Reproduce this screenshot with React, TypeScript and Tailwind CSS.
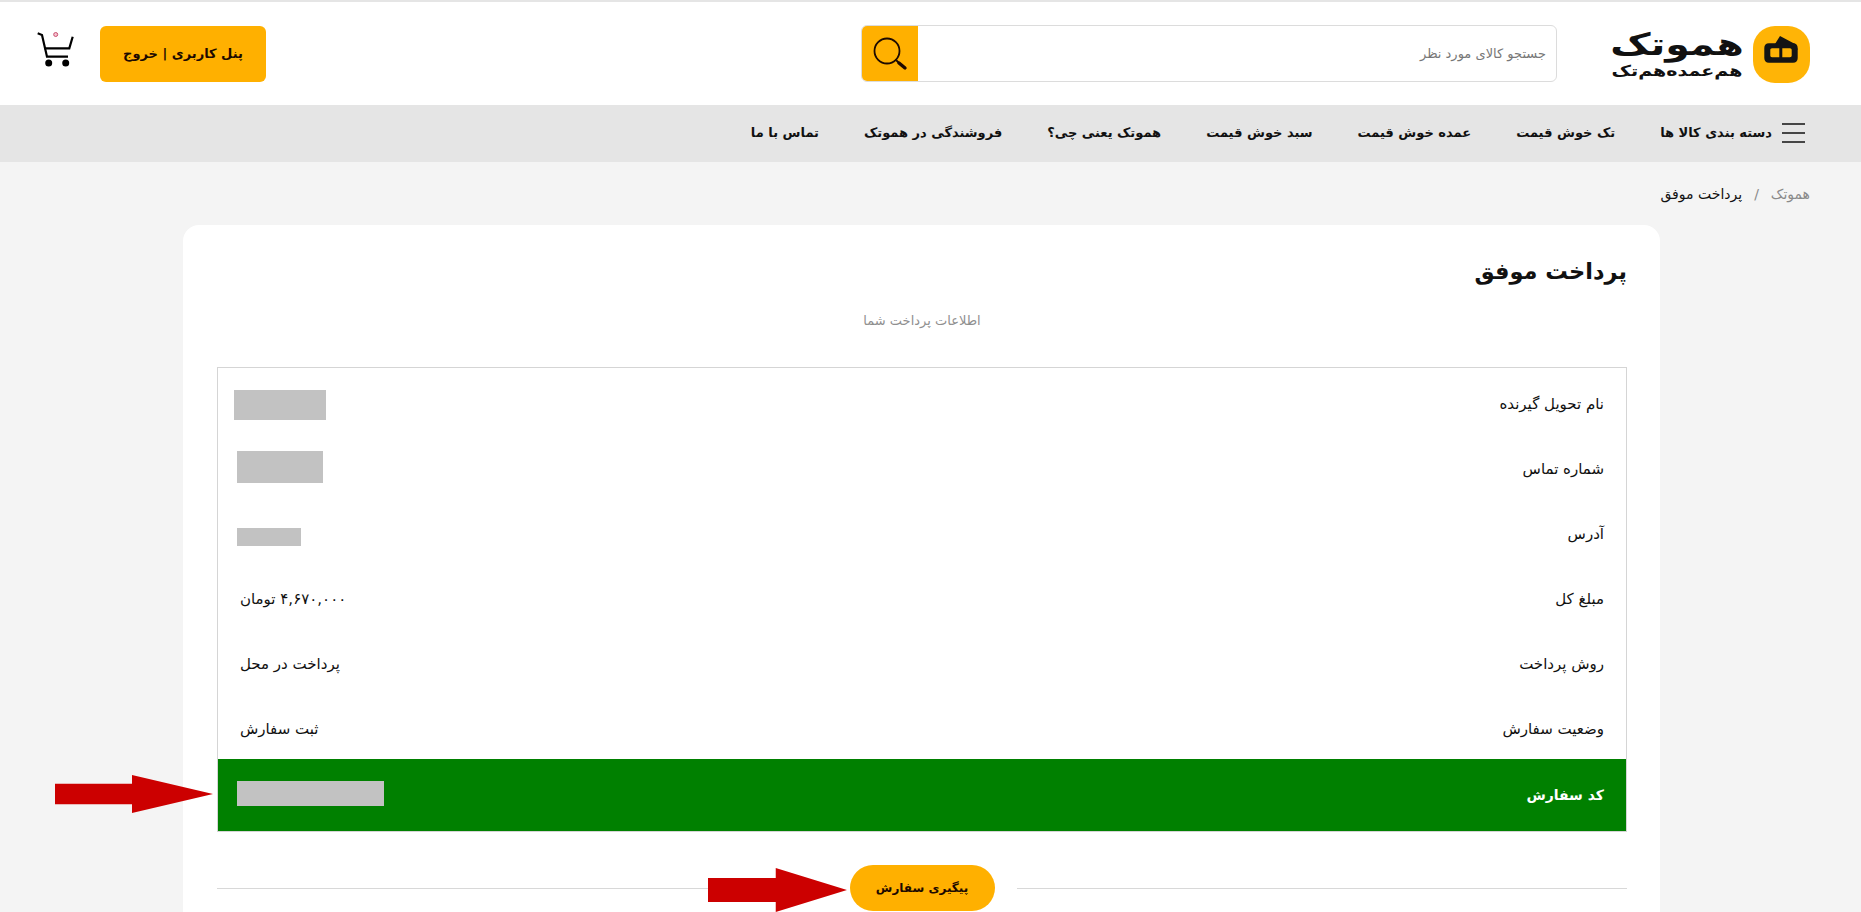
const navItems = [
  'تک خوش قیمت',
  'عمده خوش قیمت',
  'سبد خوش قیمت',
  'هموتک یعنی چی؟',
  'فروشندگی در هموتک',
  'تماس با ما'
]

interface OrderRow {
  label: string
  value?: string
  blurClass?: string
}

const rows: OrderRow[] = [
  { label: 'نام تحویل گیرنده', blurClass: 'w-[92px] h-[30px] ml-[16px] mt-[6px]' },
  { label: 'شماره تماس', blurClass: 'w-[86px] h-[32px] ml-[19px]' },
  { label: 'آدرس', blurClass: 'w-[64px] h-[18px] ml-[19px] mt-[11px]' },
  { label: 'مبلغ کل', value: '۴,۶۷۰,۰۰۰ تومان' },
  { label: 'روش پرداخت', value: 'پرداخت در محل' },
  { label: 'وضعیت سفارش', value: 'ثبت سفارش' }
]

function RedArrow({ className }: { className: string }) {
  return (
    <svg className={className} viewBox="0 0 158 44" preserveAspectRatio="none">
      <path d="M0 10H77V0L158 22L77 44V34H0Z" fill="#cc0000" />
    </svg>
  )
}

function LogoMark() {
  return (
    <div className="w-[57px] h-[57px] mt-[2px] rounded-[22px] bg-[#ffb406] shrink-0">
      <svg viewBox="0 0 57 57" className="w-full h-full" fill="#141414">
        <path d="M22 18L27 10L43 18.500L44.700 24L34 18.500Z" />
        <path
          fillRule="evenodd"
          d="M16 17.300H40C43 17.300 44.700 19 44.700 22V32C44.700 35 43 36.700 40 36.700H16C13 36.700 11.300 35 11.300 32V22C11.300 19 13 17.300 16 17.300ZM19 22.300C18 22.300 17.300 23 17.300 24V29.600C17.300 30.600 18 31.300 19 31.300H26.300V22.300ZM29.300 22.300V31.300H37C38 31.300 38.700 30.600 38.700 29.600V24C38.700 23 38 22.300 37 22.300Z"
        />
      </svg>
    </div>
  )
}

function SearchGlyph() {
  return (
    <svg viewBox="0 0 36 36" className="w-[36px] h-[36px]" fill="none" stroke="#1d0a00" strokeLinecap="round">
      <circle cx="15" cy="15" r="12.500" strokeWidth="1.800" />
      <path d="M24 24L27 27" strokeWidth="1.800" />
      <path d="M27 27L33 32" strokeWidth="3.400" />
    </svg>
  )
}

function CartGlyph() {
  return (
    <svg viewBox="0 0 37 36" className="w-[37px] h-[36px] mb-[7px]" fill="none">
      <path d="M0.700 1.300L5 3L10 24.700H31" stroke="#000" strokeWidth="2.200" />
      <path d="M35.700 4.700L32.300 16.300H7.500" stroke="#000" strokeWidth="2.200" />
      <circle cx="11.700" cy="31" r="3.500" fill="#000" />
      <circle cx="28.700" cy="31" r="3.500" fill="#000" />
      <circle cx="18.700" cy="2.500" r="2" fill="#f5c2d0" stroke="#c9506f" strokeWidth="1" />
    </svg>
  )
}

function MenuGlyph() {
  return (
    <svg viewBox="0 0 23 20" className="w-[23px] h-[20px] shrink-0" stroke="#111" strokeWidth="1.500">
      <path d="M0 1H23M0 10H23M0 19H23" />
    </svg>
  )
}

export default function App() {
  return (
    <div dir="rtl" className="relative h-[912px] overflow-hidden bg-[#f4f4f4] font-['DejaVu_Sans','Noto_Sans',sans-serif] text-[#111]">
      <header className="h-[105px] bg-white border-t-2 border-[#e5e5e5] flex items-center pr-[51px] pl-[37px]">
        <LogoMark />
        <div className="w-[130px] mr-[11px] shrink-0 text-center">
          <div className="text-[31px] leading-[34px] font-bold scale-x-[1.27]">هموتک</div>
          <div className="text-[15px] leading-[20px] font-bold whitespace-nowrap scale-x-[1.27]">هم‌عمده‌هم‌تک</div>
        </div>
        <div className="w-[696px] h-[57px] mr-[55px] flex border border-[#dcdcdc] rounded-md bg-white overflow-hidden shrink-0">
          <div className="flex-1 pr-[10px] flex items-center text-[13px] text-[#777]">جستجو کالای مورد نظر</div>
          <div className="w-[56px] bg-[#ffb000] flex items-center justify-center">
            <SearchGlyph />
          </div>
        </div>
        <div className="mr-auto flex items-center gap-[26px]">
          <button className="w-[166px] h-[56px] rounded-md bg-[#ffb000] text-[13px] font-bold text-[#1d0a00]">پنل کاربری | خروج</button>
          <CartGlyph />
        </div>
      </header>

      <nav className="h-[57px] bg-[#e5e5e5] flex items-center pr-[56px] pb-[2px] text-[13px] font-bold whitespace-nowrap">
        <MenuGlyph />
        <span className="mr-[10px] ml-[45px]">دسته بندی کالا ها</span>
        <div className="flex gap-[45px]">
          {navItems.map((item) => (
            <span key={item}>{item}</span>
          ))}
        </div>
      </nav>

      <div className="h-[63px] pr-[51px] pt-[2px] flex items-center gap-[12px] text-[14px]">
        <span className="text-[#8a8a8a]">هموتک</span>
        <span className="text-[#8a8a8a]">/</span>
        <span>پرداخت موفق</span>
      </div>

      <main className="mr-[201px] w-[1477px] h-[700px] bg-white rounded-t-2xl pr-[33px] pl-[34px] pt-[25px]">
        <h1 className="text-[22.5px] leading-[42px] font-bold">پرداخت موفق</h1>
        <p className="mt-[16px] h-[26px] leading-[26px] text-center text-[13px] text-[#8f8f8f]">اطلاعات پرداخت شما</p>

        <div className="mt-[33px] pt-[1px] border border-[#d5d5d5]">
          {rows.map((row) => (
            <div key={row.label} className="h-[65px] flex items-center justify-between pr-[22px] text-[15px]">
              <span className="pt-[6px]">{row.label}</span>
              {row.blurClass ? (
                <span className={`bg-[#c2c2c2] ${row.blurClass}`} />
              ) : (
                <span className="pt-[6px] ml-[22px]">{row.value}</span>
              )}
            </div>
          ))}
          <div className="h-[72px] bg-[#008000] flex items-center justify-between pr-[22px] pl-[19px] text-white text-[14px] font-bold">
            <span>کد سفارش</span>
            <span className="w-[147px] h-[25px] mb-[4px] bg-[#c2c2c2]" />
          </div>
        </div>

        <div className="mt-[33px] flex items-center">
          <div className="flex-1 border-t border-[#d8d8d8]" />
          <button className="mx-[22px] w-[145px] h-[46px] rounded-full bg-[#ffb000] text-[12px] font-bold text-[#1d0a00]">پیگیری سفارش</button>
          <div className="flex-1 border-t border-[#d8d8d8]" />
        </div>
      </main>

      <RedArrow className="absolute left-[55px] top-[775px] w-[158px] h-[38px]" />
      <RedArrow className="absolute left-[708px] top-[868px] w-[139px] h-[44px]" />
    </div>
  )
}
